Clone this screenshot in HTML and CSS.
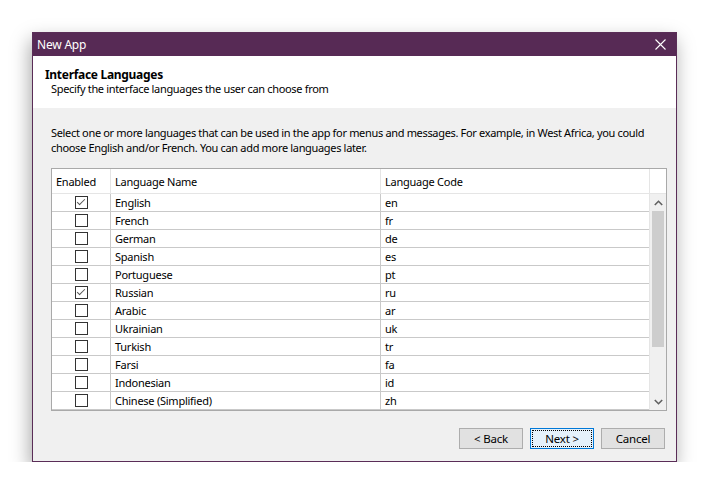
FILE: index.html
```html
<!DOCTYPE html>
<html>
<head>
<meta charset="utf-8">
<link rel="stylesheet" href="styles.css">
</head>
<body>
<div class="window">
  <div class="titlebar">
    <span class="title">New App</span>
    <svg class="close" width="11" height="11" viewBox="0 0 11 11"><path d="M0.5 0.5 L10.5 10.5 M10.5 0.5 L0.5 10.5" stroke="#fff" stroke-width="1.1" fill="none"/></svg>
  </div>
  <div class="header">
    <div class="h-title">Interface Languages</div>
    <div class="h-sub">Specify the interface languages the user can choose from</div>
  </div>
  <div class="content">
    <p class="desc">Select one or more languages that can be used in the app for menus and messages. For example, in West Africa, you could choose English and/or French. You can add more languages later.</p>
    <div class="grid">
      <div class="grid-head">
        <div class="hc c-en">Enabled</div>
        <div class="hc c-name">Language Name</div>
        <div class="hc c-code">Language Code</div>
        <div class="hc c-sb"></div>
      </div>
      <div class="grid-body">
        <div class="rows">
          <div class="row"><div class="cell c-en"><span class="cb checked"></span></div><div class="cell c-name">English</div><div class="cell c-code">en</div></div>
          <div class="row"><div class="cell c-en"><span class="cb"></span></div><div class="cell c-name">French</div><div class="cell c-code">fr</div></div>
          <div class="row"><div class="cell c-en"><span class="cb"></span></div><div class="cell c-name">German</div><div class="cell c-code">de</div></div>
          <div class="row"><div class="cell c-en"><span class="cb"></span></div><div class="cell c-name">Spanish</div><div class="cell c-code">es</div></div>
          <div class="row"><div class="cell c-en"><span class="cb"></span></div><div class="cell c-name">Portuguese</div><div class="cell c-code">pt</div></div>
          <div class="row"><div class="cell c-en"><span class="cb checked"></span></div><div class="cell c-name">Russian</div><div class="cell c-code">ru</div></div>
          <div class="row"><div class="cell c-en"><span class="cb"></span></div><div class="cell c-name">Arabic</div><div class="cell c-code">ar</div></div>
          <div class="row"><div class="cell c-en"><span class="cb"></span></div><div class="cell c-name">Ukrainian</div><div class="cell c-code">uk</div></div>
          <div class="row"><div class="cell c-en"><span class="cb"></span></div><div class="cell c-name">Turkish</div><div class="cell c-code">tr</div></div>
          <div class="row"><div class="cell c-en"><span class="cb"></span></div><div class="cell c-name">Farsi</div><div class="cell c-code">fa</div></div>
          <div class="row"><div class="cell c-en"><span class="cb"></span></div><div class="cell c-name">Indonesian</div><div class="cell c-code">id</div></div>
          <div class="row"><div class="cell c-en"><span class="cb"></span></div><div class="cell c-name">Chinese (Simplified)</div><div class="cell c-code">zh</div></div>
          <div class="row"><div class="cell c-en"></div><div class="cell c-name"></div><div class="cell c-code"></div></div>
        </div>
        <div class="scrollbar">
          <div class="sb-arrow">
            <svg width="9" height="6" viewBox="0 0 9 6"><path d="M0.8 5 L4.5 1.3 L8.2 5" stroke="#606060" stroke-width="1.6" fill="none"/></svg>
          </div>
          <div class="sb-track"><div class="sb-thumb"></div></div>
          <div class="sb-arrow">
            <svg width="9" height="6" viewBox="0 0 9 6"><path d="M0.8 1 L4.5 4.7 L8.2 1" stroke="#606060" stroke-width="1.6" fill="none"/></svg>
          </div>
        </div>
      </div>
    </div>
    <div class="buttons">
      <button class="btn">&lt; Back</button>
      <button class="btn default"><span class="focus">Next &gt;</span></button>
      <button class="btn">Cancel</button>
    </div>
  </div>
</div>
</body>
</html>
```
FILE: styles.css
```css
html, body {
  margin: 0;
  padding: 0;
  background: #ffffff;
}
body {
  padding: 32px 0 0 32px;
  font-family: "Noto Sans", "Open Sans", "Liberation Sans", sans-serif;
  font-size: 11px;
  color: #000;
}
.window {
  width: 643px;
  height: 428px;
  border: 1px solid #5a2d57;
  background: #f0f0f0;
  box-shadow: -2px 8px 18px rgba(0, 0, 0, 0.35);
  display: flex;
  flex-direction: column;
}
.titlebar {
  height: 23px;
  background: #572a55;
  color: #fff;
  display: flex;
  align-items: center;
  justify-content: space-between;
  padding: 0 10px 0 4px;
  flex: none;
}
.title {
  font-size: 12px;
  line-height: 14px;
  letter-spacing: -0.2px;
}
.close {
  display: block;
}
.header {
  height: 52px;
  background: #fff;
  padding: 12px 0 0 12px;
  box-sizing: border-box;
  flex: none;
}
.h-title {
  font-weight: bold;
  line-height: 14px;
  font-size: 12px;
  letter-spacing: -0.3px;
}
.h-sub {
  padding-left: 6px;
  line-height: 14px;
  font-size: 11px;
  letter-spacing: -0.33px;
}
.content {
  padding: 17px 0 0 18px;
  display: flex;
  flex-direction: column;
}
.desc {
  margin: 0;
  width: 610px;
  line-height: 15px;
  font-size: 11px;
  letter-spacing: -0.33px;
}
.grid {
  margin-top: 13px;
  width: 614px;
  height: 241px;
  border: 1px solid #a9a9a9;
  background: #fff;
  display: flex;
  flex-direction: column;
  overflow: hidden;
}
.grid-head {
  display: flex;
  height: 25px;
  flex: none;
  border-bottom: 1px solid #e5e5e5;
  box-sizing: border-box;
}
.hc {
  box-sizing: border-box;
  border-right: 1px solid #e5e5e5;
  padding-left: 4px;
  line-height: 25px;
  font-size: 11px;
  letter-spacing: -0.25px;
}
.hc.c-sb {
  border-right: none;
  flex: 1;
}
.c-en { width: 59px; flex: none; box-sizing: border-box; }
.c-name { width: 270px; flex: none; box-sizing: border-box; }
.c-code { width: 269px; flex: none; box-sizing: border-box; }
.grid-body {
  flex: 1;
  display: flex;
  overflow: hidden;
}
.rows {
  width: 598px;
  overflow: hidden;
}
.row {
  display: flex;
  height: 18px;
  border-bottom: 1px solid #c9c9c9;
  box-sizing: border-box;
}
.cell {
  border-right: 1px solid #c9c9c9;
  line-height: 17px;
  padding-left: 4px;
  font-size: 11px;
  letter-spacing: -0.25px;
  white-space: nowrap;
  overflow: hidden;
}
.cell.c-en {
  display: flex;
  justify-content: center;
  align-items: center;
  padding-left: 0;
  padding-bottom: 1px;
}
.cb {
  width: 11px;
  height: 11px;
  border: 1px solid #333;
  background: #fff;
  position: relative;
  margin-left: 1px;
}
.cb.checked::after {
  content: "";
  position: absolute;
  left: 3px;
  top: 0px;
  width: 3px;
  height: 7px;
  border-right: 1px solid #555;
  border-bottom: 1px solid #555;
  transform: rotate(45deg);
  transform-origin: center;
}
.scrollbar {
  width: 17px;
  flex: none;
  background: #f0f0f0;
  border-left: 1px solid #e5e5e5;
  box-sizing: border-box;
  display: flex;
  flex-direction: column;
}
.sb-arrow {
  height: 17px;
  flex: none;
  display: flex;
  align-items: center;
  justify-content: center;
}
.sb-track {
  flex: 1;
  padding: 0 2px 0 2px;
}
.sb-thumb {
  height: 136px;
  background: #cdcdcd;
}
.buttons {
  display: flex;
  justify-content: flex-end;
  gap: 7px;
  width: 614px;
  margin-top: 17px;
}
.btn {
  width: 64px;
  height: 21px;
  border: 1px solid #adadad;
  background: #e1e1e1;
  font-family: "Noto Sans", "Open Sans", "Liberation Sans", sans-serif;
  font-size: 11.5px;
  letter-spacing: -0.2px;
  color: #000;
  padding: 0;
  display: flex;
  align-items: center;
  justify-content: center;
}
.btn.default {
  border: 1px solid #0078d7;
  background: #e5f1fb;
  padding: 1px;
}
.focus {
  flex: 1;
  align-self: stretch;
  border: 1px dotted #000;
  display: flex;
  align-items: center;
  justify-content: center;
}
```
